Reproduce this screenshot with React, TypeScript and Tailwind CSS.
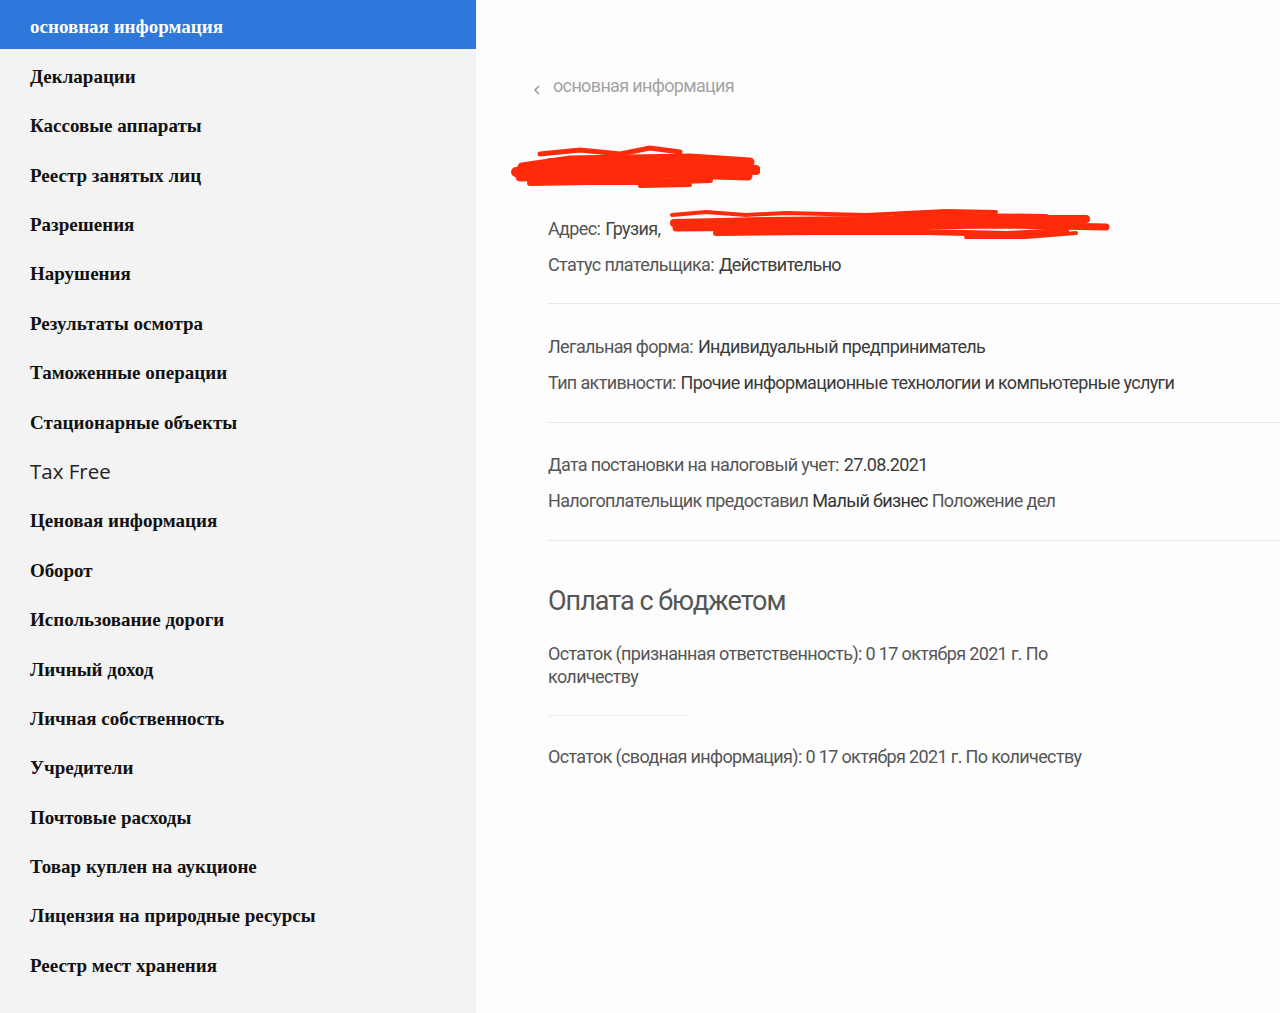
import React from "react";

const items = [
  "Декларации",
  "Кассовые аппараты",
  "Реестр занятых лиц",
  "Разрешения",
  "Нарушения",
  "Результаты осмотра",
  "Таможенные операции",
  "Стационарные объекты",
  "Tax Free",
  "Ценовая информация",
  "Оборот",
  "Использование дороги",
  "Личный доход",
  "Личная собственность",
  "Учредители",
  "Почтовые расходы",
  "Товар куплен на аукционе",
  "Лицензия на природные ресурсы",
  "Реестр мест хранения",
];

const serif = { fontFamily: '"Liberation Serif", "Times New Roman", serif' };
const cond = {
  fontFamily: 'Roboto, "Liberation Sans", sans-serif',
};

function Scribble1() {
  return (
    <svg width="250" height="50" viewBox="0 0 250 50" className="block">
      <g stroke="#ff2a0a" strokeLinecap="round" fill="none">
        <path d="M30 12 L70 8 L110 12 L140 6 L170 10" strokeWidth="5" />
        <path d="M12 25 L60 18 L120 17 L180 16 L240 20" strokeWidth="9" />
        <path d="M6 30 L80 26 L160 24 L246 28" strokeWidth="10" />
        <path d="M10 35 L90 34 L170 32 L238 34" strokeWidth="9" />
        <path d="M20 41 L80 40 L140 40 L200 38" strokeWidth="6" />
        <path d="M40 20 L100 20 L150 18" strokeWidth="8" />
        <path d="M130 44 L180 43" strokeWidth="4" />
      </g>
    </svg>
  );
}

function Scribble2() {
  return (
    <svg width="450" height="36" viewBox="0 0 450 36" className="block">
      <g stroke="#ff2a0a" strokeLinecap="round" fill="none">
        <path d="M6 8 L40 5 L80 8 L120 6 L200 8 L280 4 L330 5" strokeWidth="4" />
        <path d="M8 16 L100 14 L200 13 L300 12 L420 12" strokeWidth="8" />
        <path d="M10 21 L120 20 L240 19 L340 18 L440 20" strokeWidth="7" />
        <path d="M50 26 L150 25 L260 25 L340 27 L400 24" strokeWidth="6" />
        <path d="M300 30 L360 30 L410 26" strokeWidth="4" />
        <path d="M230 8 L300 9 L380 10" strokeWidth="6" />
      </g>
    </svg>
  );
}

export default function App() {
  return (
    <div className="flex w-[1280px] h-[1013px] overflow-hidden bg-[#fdfdfd]">
      <aside className="w-[476px] shrink-0 bg-[#f3f3f3]">
        <div
          className="h-[49.4px] flex items-center pl-[30px] pt-[6px] bg-[#2d78da] text-white text-[19px] font-bold"
          style={serif}
        >
          основная информация
        </div>
        {items.map((t) =>
          t === "Tax Free" ? (
            <div
              key={t}
              className="h-[49.4px] flex items-center pl-[30px] pt-[4px] text-[20.5px] text-[#222]"
              style={{ fontFamily: '"Open Sans", sans-serif' }}
            >
              {t}
            </div>
          ) : (
            <div
              key={t}
              className="h-[49.4px] flex items-center pl-[30px] pt-[6px] text-[19px] font-bold text-[#111]"
              style={serif}
            >
              {t}
            </div>
          )
        )}
      </aside>

      <main className="flex-1 pl-[72px] tracking-[-0.65px]" style={cond}>
        <div className="flex items-center h-[36px] mt-[67px] -ml-[16px] text-[18px] text-[#a3a3a3]">
          <svg width="10" height="12" viewBox="0 0 10 12" className="mr-[11px] mt-[10px]">
            <path d="M7 2 L3 6 L7 10" stroke="#999" strokeWidth="1.6" fill="none" />
          </svg>
          основная информация
        </div>

        <div className="mt-[39px] -ml-[38px]">
          <Scribble1 />
        </div>

        <div className="pb-[21px] mt-[18px] border-b border-[#e8e8e8] text-[18px]">
          <div className="h-[36px] flex items-center relative">
            <span className="text-[#555]">Адрес:</span>
            <span className="text-[#444] ml-[5px]">Грузия,</span>
            <div className="absolute left-[118px] top-[-3px]">
              <Scribble2 />
            </div>
          </div>
          <div className="h-[36px] flex items-center">
            <span className="text-[#555]">Статус плательщика:</span>
            <span className="text-[#3a3a3a] ml-[5px]">Действительно</span>
          </div>
        </div>

        <div className="pt-[24px] pb-[22px] border-b border-[#e8e8e8] text-[18px]">
          <div className="h-[36px] flex items-center">
            <span className="text-[#555]">Легальная форма:</span>
            <span className="text-[#3a3a3a] ml-[5px]">Индивидуальный предприниматель</span>
          </div>
          <div className="h-[36px] flex items-center">
            <span className="text-[#555]">Тип активности:</span>
            <span className="text-[#3a3a3a] ml-[5px]">
              Прочие информационные технологии и компьютерные услуги
            </span>
          </div>
        </div>

        <div className="pt-[23px] pb-[22px] border-b border-[#e8e8e8] text-[18px]">
          <div className="h-[36px] flex items-center">
            <span className="text-[#555]">Дата постановки на налоговый учет:</span>
            <span className="text-[#3a3a3a] ml-[5px]">27.08.2021</span>
          </div>
          <div className="h-[36px] flex items-center">
            <span className="text-[#555]">
              Налогоплательщик предоставил <span className="text-[#333]">Малый бизнес</span>{" "}
              Положение дел
            </span>
          </div>
        </div>

        <h2 className="mt-[42px] h-[36px] leading-[36px] text-[27px] tracking-[-1px] text-[#555] font-normal">
          Оплата с бюджетом
        </h2>

        <div className="mt-[23px] w-[520px] text-[18px] leading-[23px] text-[#555]">
          Остаток (признанная ответственность): 0 17 октября 2021 г. По количеству
        </div>

        <div className="mt-[27px] w-[140px] border-t border-[#ececec]" />

        <div className="mt-[29px] text-[18px] leading-[23px] text-[#555]">
          Остаток (сводная информация): 0 17 октября 2021 г. По количеству
        </div>
      </main>
    </div>
  );
}
